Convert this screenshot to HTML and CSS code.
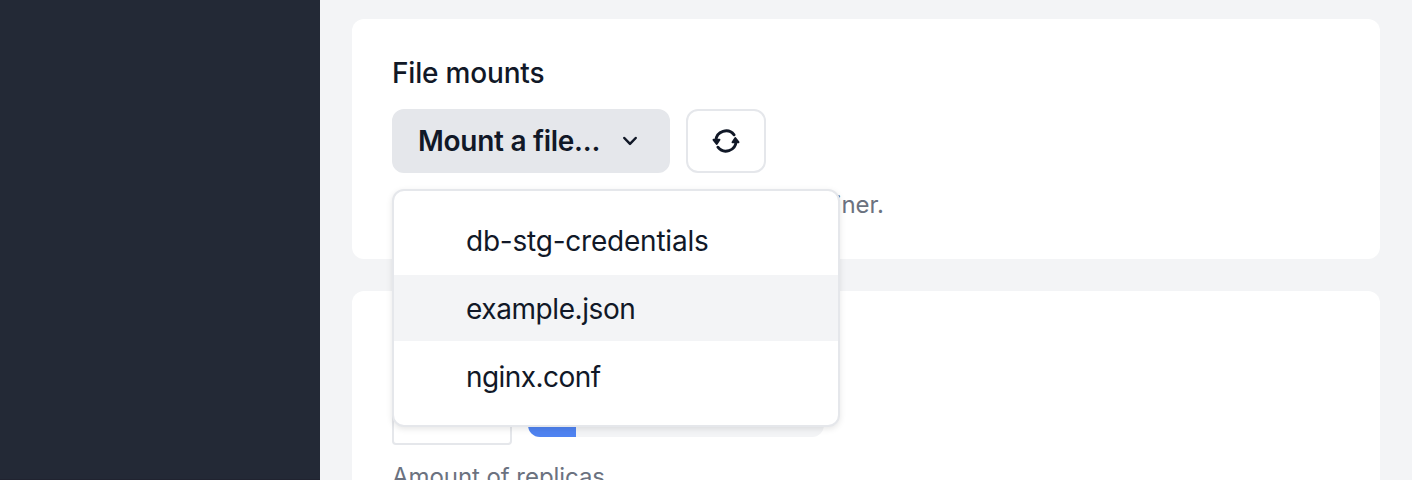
FILE: index.html
```html
<!DOCTYPE html>
<html lang="en">
<head>
<meta charset="utf-8">
<title>File mounts</title>
<link rel="stylesheet" href="styles.css">
</head>
<body>
<div class="app">
  <aside class="sidebar"></aside>
  <main class="content">
    <section class="card card-mounts">
      <h2 class="label">File mounts</h2>
      <div class="actions">
        <div class="dropdown">
          <button class="btn btn-mount" type="button"><span class="btn-text">Mount a file...</span>
            <svg class="chevron" width="16" height="12" viewBox="0 0 16 12" fill="none" stroke="currentColor" stroke-width="2.5" stroke-linecap="round" stroke-linejoin="round"><path d="M2.3 3 8 8.9 13.7 3"/></svg>
          </button>
          <ul class="menu">
            <li class="menu-item">db-stg-credentials</li>
            <li class="menu-item active">example.json</li>
            <li class="menu-item">nginx.conf</li>
          </ul>
        </div>
        <button class="btn btn-refresh" type="button" aria-label="Refresh">
          <svg width="28" height="28" viewBox="0 0 28 28" fill="none" stroke="currentColor" stroke-width="2.9" stroke-linecap="round" stroke-linejoin="round">
            <path d="M3.9 13.5A10.2 10.2 0 0 1 22.1 7.8"/>
            <path d="M24.1 14.5A10.2 10.2 0 0 1 5.9 20.2"/>
            <path d="M1.5 12.8H7.5L4.7 16.9Z" fill="currentColor" stroke-width="1.9"/>
            <path d="M26.5 15.2H20.5L23.3 11.1Z" fill="currentColor" stroke-width="1.9"/>
          </svg>
        </button>
      </div>
      <p class="hint mount-hint">Files to be mounted into the container.</p>
    </section>
    <section class="card card-replicas">
      <h2 class="label">Replicas</h2>
      <div class="replica-row">
        <div class="number-box"></div>
        <div class="slider"><div class="slider-fill"></div></div>
      </div>
      <p class="hint">Amount of replicas</p>
    </section>
  </main>
</div>
</body>
</html>
```
FILE: styles.css
```css
* { box-sizing: border-box; }
body {
  margin: 0;
  height: 480px;
  overflow: hidden;
  font-family: Inter, "Liberation Sans", sans-serif;
  color: #111827;
  background: #f3f4f6;
}
.app { display: flex; height: 480px; overflow: hidden; }
.sidebar { width: 320px; flex: none; background: #232936; border-bottom: 1px solid #202330; }
.content {
  flex: 1;
  display: flex;
  flex-direction: column;
  gap: 32px;
  padding: 19px 32px 0;
}
.card { flex: none; background: #fff; border-radius: 12px; padding: 34px 40px 0; }
.card-mounts { height: 240px; }
.card-replicas { height: 260px; }
.label { margin: 0; font-size: 28px; line-height: 40px; font-weight: 500; letter-spacing: -0.18px; }
.actions { display: flex; gap: 16px; margin-top: 16px; }
.dropdown { position: relative; }
.btn {
  display: flex;
  align-items: center;
  height: 64px;
  padding: 0;
  border: 2px solid #e5e7eb;
  border-radius: 12px;
  font-family: inherit;
  color: inherit;
}
.btn-mount {
  width: 278px;
  padding-left: 24px;
  gap: 22px;
  background: #e5e7eb;
  font-size: 28px;
  font-weight: 600;
  letter-spacing: -0.28px;
}
.btn-text { white-space: nowrap; }
.btn-refresh { width: 80px; justify-content: center; background: #fff; }
.menu {
  position: absolute;
  top: 80px;
  left: 0;
  z-index: 2;
  width: 448px;
  margin: 0;
  padding: 16px 0;
  display: flex;
  flex-direction: column;
  gap: 2px;
  list-style: none;
  background: #fff;
  border: 2px solid #e5e7eb;
  border-radius: 12px;
  box-shadow: 0 2px 6px rgba(0, 0, 0, 0.1);
}
.menu-item { height: 66px; padding-left: 72px; font-size: 28px; line-height: 68px; letter-spacing: -0.22px; }
.menu-item.active { background: #f3f4f6; letter-spacing: -0.42px; }
.menu-item:last-child { letter-spacing: -0.55px; }
.hint { margin: 0; font-size: 24px; line-height: 32px; color: #6b7280; white-space: nowrap; }
.mount-hint { width: 492px; margin-top: 16px; text-align: right; }
.replica-row { display: flex; gap: 16px; align-items: center; margin-top: 16px; }
.number-box { width: 120px; height: 64px; border: 2px solid #e5e7eb; border-radius: 4px; }
.slider { width: 296px; height: 48px; border-radius: 12px; background: #f3f4f6; overflow: hidden; }
.slider-fill { width: 48px; height: 100%; background: #4f83f1; }
.card-replicas .hint { margin-top: 16px; letter-spacing: -0.06px; }
```
